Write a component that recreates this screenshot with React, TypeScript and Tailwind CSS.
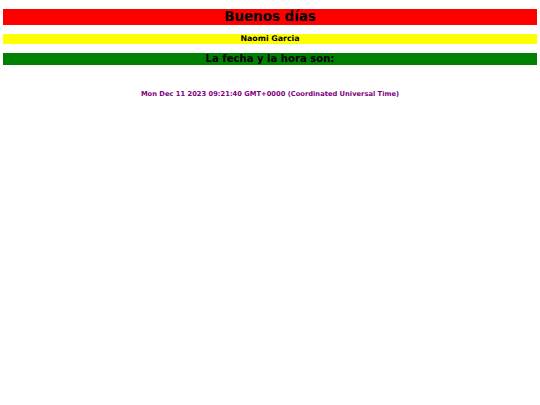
export default function App() {
  return (
    <div className="min-h-[405px] bg-white px-[3px] pt-[9px] font-['DejaVu_Sans',sans-serif] font-bold text-black">
      <div className="flex h-[16px] items-center justify-center bg-[#ff0000] text-[13.44px] leading-none">
        Buenos días
      </div>
      <div className="mt-[9px] flex h-[10px] items-center justify-center bg-[#ffff00] text-[7.86px] leading-none">
        Naomi Garcia
      </div>
      <div className="mt-[9px] flex h-[12px] items-center justify-center bg-[#008000] text-[10.08px] leading-none">
        La fecha y la hora son:
      </div>
      <div className="mt-[25px] flex h-[8px] items-center justify-center text-[6.72px] leading-none text-[#800080]">
        Mon Dec 11 2023 09:21:40 GMT+0000 (Coordinated Universal Time)
      </div>
    </div>
  );
}
